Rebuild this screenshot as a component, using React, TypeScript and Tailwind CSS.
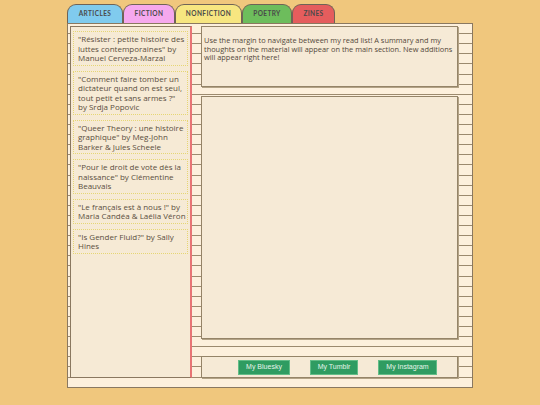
import { Fragment } from "react";

export default function App() {
  const tabs = [
    { label: "ARTICLES", cls: "w-[56px] bg-[#80cbee]" },
    { label: "FICTION", cls: "w-[52px] bg-[#f6a8ee]" },
    { label: "NONFICTION", cls: "w-[67px] bg-[#f7e680]" },
    { label: "POETRY", cls: "w-[50px] bg-[#6dbd5c]" },
    { label: "ZINES", cls: "w-[43px] bg-[#e55d5d]" },
  ];
  const items: string[][] = [
    ["\"Résister : petite histoire des", "luttes contemporaines\" by", "Manuel Cerveza-Marzal"],
    ["\"Comment faire tomber un", "dictateur quand on est seul,", "tout petit et sans armes ?\"", "by Srdja Popovic"],
    ["\"Queer Theory : une histoire", "graphique\" by Meg-John", "Barker & Jules Scheele"],
    ["\"Pour le droit de vote dès la", "naissance\" by Clémentine", "Beauvais"],
    ["\"Le français est à nous !\" by", "Maria Candéa & Laélia Véron"],
    ["\"Is Gender Fluid?\" by Sally", "Hines"],
  ];
  const buttons = [
    { label: "My Bluesky", cls: "w-[52px]" },
    { label: "My Tumblr", cls: "w-[48px]" },
    { label: "My Instagram", cls: "w-[59px]" },
  ];
  return (
    <div className="min-h-[405px] w-[540px] bg-[#f0c77d] pt-[4px] font-['Open_Sans',sans-serif]">
      <div className="mx-auto w-[406px]">
        <div className="flex h-[19px]">
          {tabs.map((t) => (
            <div
              key={t.label}
              className={`${t.cls} flex items-center justify-center rounded-t-[9px] border border-b-0 border-[#6f6356] font-['Lato',sans-serif] text-[6.5px] font-bold tracking-[0.4px] text-[#4a4a4a]`}
            >
              {t.label}
            </div>
          ))}
        </div>
        <div className="flex h-[365px] gap-[9px] border border-[#8a7860] bg-[#fdf0dc] bg-[repeating-linear-gradient(to_bottom,transparent_0px,transparent_9.1px,#9c8a6e_9.1px,#9c8a6e_10.1px)] pl-[2px] pr-[14px] pt-[2px]">
          <div className="flex h-[352px] w-[122px] flex-col gap-[5px] border-y border-l border-r-2 border-y-[#8a7860] border-l-[#8a7860] border-r-[#e87474] bg-[#f6ead5] pl-[2px] pr-[2px] pt-[4px]">
            {items.map((lines) => (
              <div
                key={lines[0]}
                className="whitespace-nowrap border border-dotted border-[#e6d674] py-[2px] pl-[4px] pr-[1px] text-[8px] leading-[9.5px] text-[#5a4e40]"
              >
                {lines.map((l, i) => (
                  <Fragment key={i}>
                    {i > 0 && <br />}
                    {l}
                  </Fragment>
                ))}
              </div>
            ))}
          </div>
          <div className="flex w-[257px] flex-col">
            <div className="h-[61px] border border-[#958468] bg-[#f6ead6] pl-[2px] pr-[4px] pt-[9px] text-[7.4px] leading-[8.5px] text-[#54483a] shadow-[1px_1px_0_#b3a386]">
              Use the margin to navigate between my read list! A summary and my thoughts on the material will appear on the main section. New additions will appear right here!
            </div>
            <div className="mt-[9px] h-[243px] border border-[#958468] bg-[#f6ead6] shadow-[1px_1px_0_#b3a386]" />
            <div className="mt-[17px] flex h-[22px] items-center gap-[20px] border border-[#958468] bg-[#f6ead6] pl-[36px] shadow-[1px_1px_0_#b3a386]">
              {buttons.map((b) => (
                <div
                  key={b.label}
                  className={`${b.cls} flex h-[15px] items-center justify-center border border-[#63bd87] bg-[#2f9c61] font-['Liberation_Sans',sans-serif] text-[7px] text-[#e6f4ea]`}
                >
                  {b.label}
                </div>
              ))}
            </div>
          </div>
        </div>
      </div>
    </div>
  );
}
